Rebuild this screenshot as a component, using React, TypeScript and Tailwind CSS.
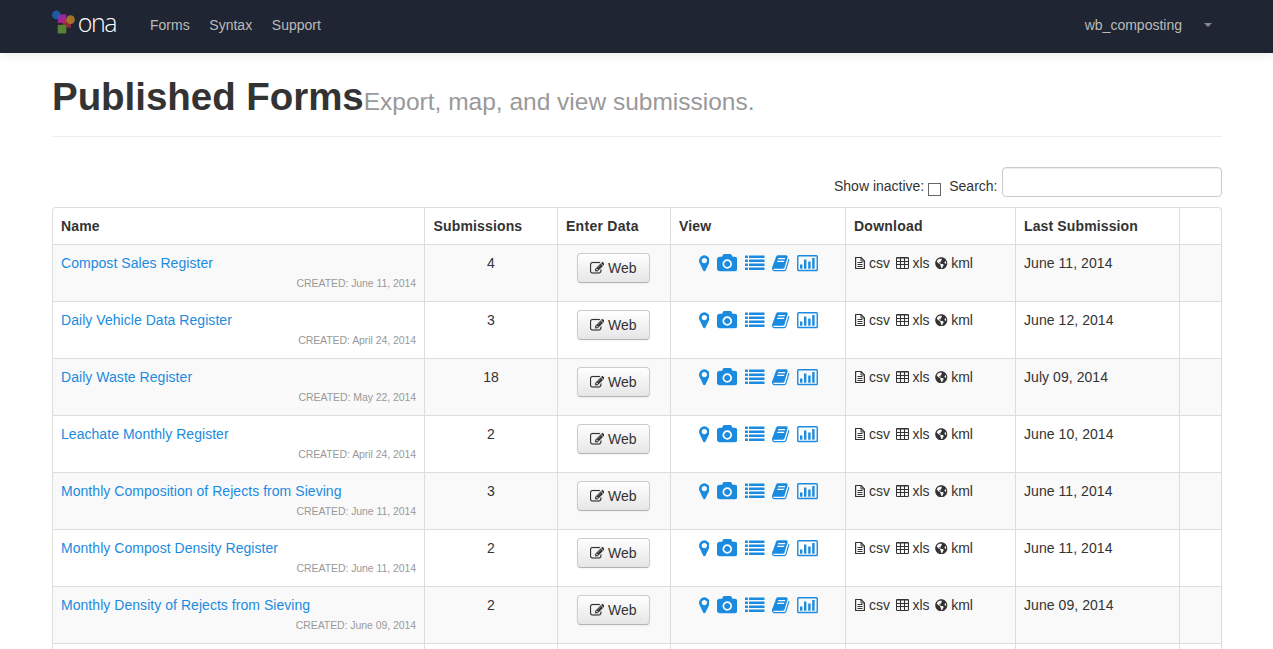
import React from "react";
import { FaGlobeAmericas } from "react-icons/fa";

type Form = { name: string; created: string; count: number; last: string };

const forms: Form[] = [
  { name: "Compost Sales Register", created: "June 11, 2014", count: 4, last: "June 11, 2014" },
  { name: "Daily Vehicle Data Register", created: "April 24, 2014", count: 3, last: "June 12, 2014" },
  { name: "Daily Waste Register", created: "May 22, 2014", count: 18, last: "July 09, 2014" },
  { name: "Leachate Monthly Register", created: "April 24, 2014", count: 2, last: "June 10, 2014" },
  { name: "Monthly Composition of Rejects from Sieving", created: "June 11, 2014", count: 3, last: "June 11, 2014" },
  { name: "Monthly Compost Density Register", created: "June 11, 2014", count: 2, last: "June 11, 2014" },
  { name: "Monthly Density of Rejects from Sieving", created: "June 09, 2014", count: 2, last: "June 09, 2014" },
];

function Logo() {
  return (
    <svg className="block h-[26px] w-[25px]" viewBox="0 0 25 26">
      <rect x="6" y="5" width="9" height="9" fill="#a0239a" />
      <rect x="11" y="10" width="9" height="9" fill="#c0303f" fillOpacity="0.65" />
      <rect x="6" y="16" width="9" height="9" fill="#568233" />
      <circle cx="4.5" cy="5.5" r="4.5" fill="#2166bb" fillOpacity="0.8" />
      <circle cx="19.5" cy="10.5" r="4.5" fill="#b08028" fillOpacity="0.88" />
    </svg>
  );
}

function MarkerIcon() {
  return (
    <svg className="h-[18.67px] w-[10.67px]" viewBox="384 0 1024 1792" fill="currentColor">
      <path d="M1152 640q0-106-75-181t-181-75-181 75-75 181 75 181 181 75 181-75 75-181zm256 0q0 109-33 179l-364 774q-16 33-47.5 52t-67.5 19-67.5-19-46.5-52l-365-774q-33-70-33-179 0-212 150-362t362-150 362 150 150 362z" />
    </svg>
  );
}

function CameraIcon() {
  return (
    <svg className="h-[18.67px] w-[20.5px]" viewBox="-64 0 1920 1792" preserveAspectRatio="none" fill="currentColor">
      <path d="M896 672q119 0 203.500 84.500t84.500 203.500-84.500 203.500-203.500 84.500-203.500-84.500-84.500-203.500 84.500-203.500 203.500-84.500zm704-416q106 0 181 75t75 181v896q0 106-75 181t-181 75h-1408q-106 0-181-75t-75-181v-896q0-106 75-181t181-75h224l51-136q19-49 69.500-84.500t103.500-35.500h512q53 0 103.500 35.500t69.500 84.500l51 136h224zm-704 1152q185 0 316.500-131.500t131.500-316.500-131.500-316.500-316.500-131.500-316.500 131.500-131.500 316.500 131.500 316.500 316.500 131.500z" />
    </svg>
  );
}

function ListIcon() {
  return (
    <svg className="h-[19px] w-[19.5px]" viewBox="0 0 19.5 19" fill="currentColor">
      {[1.4, 5.4, 9.4, 13.4].map((y) => (
        <g key={y}>
          <rect x="0" y={y} width="2.9" height="2.600" rx="0.300" />
          <rect x="4" y={y} width="15.500" height="2.600" rx="0.300" />
        </g>
      ))}
    </svg>
  );
}

function BookIcon() {
  return (
    <svg className="h-[18.67px] w-[17.33px]" viewBox="64 0 1664 1792" fill="currentColor">
      <path d="M1703 478q40 57 18 129l-275 906q-19 64-76.5 107.5t-122.5 43.5h-923q-77 0-148.5-53.5t-99.5-131.5q-24-67-2-127 0-4 3-27t4-37q1-8-3-21.5t-3-19.5q2-11 8-21t16.5-23.5 16.5-23.5q23-38 45-91.5t30-91.5q3-10 .5-30t-.5-28q3-11 17-28t17-23q21-36 42-92t25-90q1-9-2.5-32t.5-28q4-13 22-30.5t22-22.5q19-26 42.5-84.5t27.5-96.5q1-8-3-25.5t-2-26.5q2-8 9-18t18-23 17-21q8-12 16.5-30.5t15-35 16-36 19.5-32 26.5-23.5 36-11.5 47.5 5.5l-1 3q38-9 51-9h761q74 0 114 56t18 130l-274 906q-36 119-71.5 153.5t-128.5 34.5h-869q-27 0-38 15-11 16-1 43 24 70 144 70h923q29 0 56-15.5t35-41.5l300-987q7-22 5-57 38 15 59 43zm-1064 2q-4 13 2 22.5t20 9.5h608q13 0 25.5-9.5t16.5-22.5l21-64q4-13-2-22.5t-20-9.5h-608q-13 0-25.5 9.5t-16.5 22.5zm-83 256q-4 13 2 22.5t20 9.5h608q13 0 25.5-9.5t16.5-22.5l21-64q4-13-2-22.5t-20-9.5h-608q-13 0-25.5 9.5t-16.5 22.5z" />
    </svg>
  );
}

function ChartIcon() {
  return (
    <svg className="h-[19px] w-[21px]" viewBox="0 0 21 19" fill="currentColor">
      <rect x="0.750" y="1.750" width="19.500" height="14.700" rx="0.800" fill="none" stroke="currentColor" strokeWidth="1.400" />
      <rect x="3" y="10.500" width="2.400" height="4.200" />
      <rect x="7" y="5.500" width="2.400" height="9.200" />
      <rect x="11.200" y="7.500" width="2.400" height="7.200" />
      <rect x="15.200" y="4" width="2.400" height="10.700" />
    </svg>
  );
}

function FileIcon() {
  return (
    <svg className="h-[14px] w-[10px]" viewBox="0 0 10 14" fill="none" stroke="currentColor">
      <path d="M0.600 1.500h5.400l3.400 3.400v7.600H0.600z" strokeWidth="1.200" strokeLinejoin="round" />
      <path d="M6 1.500V5h3.500M2.500 6.500h5M2.500 8.500h5M2.500 10.500h5" />
    </svg>
  );
}

function TableIcon() {
  return (
    <svg className="h-[14px] w-[13px]" viewBox="0 0 13 14" fill="none" stroke="currentColor" strokeWidth="1.100">
      <rect x="0.500" y="1.500" width="12" height="11" rx="0.900" />
      <path d="M0.500 2h12M0.500 5.500h12M0.500 8.500h12M4.500 2v10.500M8.500 2v10.500" />
    </svg>
  );
}

function EditIcon() {
  return (
    <svg className="h-[14.5px] w-[14.5px]" viewBox="0 0 1792 1792" fill="currentColor" stroke="currentColor" strokeWidth="20">
      <path d="M888 1184l116-116-152-152-116 116v56h96v96h56zm440-720q-16-16-33 1l-350 350q-17 17-1 33t33-1l350-350q17-17 1-33zm80 594v190q0 119-84.5 203.5t-203.5 84.5h-832q-119 0-203.5-84.5t-84.5-203.5v-832q0-119 84.500-203.500t203.500-84.500h832q63 0 117 25 15 7 18 23 3 17-9 29l-49 49q-14 14-32 8-23-6-45-6h-832q-66 0-113 47t-47 113v832q0 66 47 113t113 47h832q66 0 113-47t47-113v-126q0-13 9-22l64-64q15-15 35-7t20 29zm-96-738l288 288-672 672h-288v-288zm444 132l-92 92-288-288 92-92q28-28 68-28t68 28l152 152q28 28 28 68t-28 68z" />
    </svg>
  );
}

const cell = "border-t border-l border-[#ddd] p-2 align-top";
const head = "border-l border-[#ddd] p-2 text-left align-bottom font-bold";

function FormRow({ form, striped }: { form: Form; striped: boolean }) {
  return (
    <tr className={striped ? "h-[57px] bg-[#f9f9f9]" : "h-[57px]"}>
      <td className={cell}>
        <a className="block tracking-[0.045px] text-[#1b8be0]">{form.name}</a>
        <div className="text-right text-[10.5px] leading-5 tracking-[-0.07px] text-[#999]">CREATED: {form.created}</div>
      </td>
      <td className={cell + " text-center"}>{form.count}</td>
      <td className={cell}>
        <button className="ml-[11px] flex h-[30px] w-[73px] items-center rounded border border-[#ccc] border-b-[#b3b3b3] bg-linear-to-b from-white to-[#e6e6e6] pl-[11.5px] shadow-[0_1px_2px_rgba(0,0,0,0.05)]">
          <EditIcon />
          <span className="ml-1">Web</span>
        </button>
      </td>
      <td className={cell}>
        <div className="flex items-start gap-[7.7px] pt-px pl-[19.6px] text-[#1b8be0]">
          <MarkerIcon />
          <CameraIcon />
          <ListIcon />
          <BookIcon />
          <ChartIcon />
        </div>
      </td>
      <td className={cell}>
        <div className="flex items-center">
          <span className="ml-px"><FileIcon /></span>
          <span className="ml-1">csv</span>
          <span className="ml-[6px]"><TableIcon /></span>
          <span className="ml-[3.5px]">xls</span>
          <FaGlobeAmericas className="ml-[5.5px] size-[12.5px]" />
          <span className="ml-[3.5px]">kml</span>
        </div>
      </td>
      <td className={cell + " tracking-[0.06px]"}>{form.last}</td>
      <td className={cell} />
    </tr>
  );
}

export default function App() {
  return (
    <div className="h-screen overflow-hidden bg-white font-['Liberation_Sans',Arial,sans-serif] text-sm leading-5 text-[#333]">
      <nav className="flex h-[53px] items-start bg-[#1f2532] pl-[52px] text-[#bbb] shadow-[0_1px_10px_rgba(0,0,0,0.1)]">
        <div className="flex w-[64px] pt-[9px]">
          <Logo />
          <span className="ml-[2px] font-['Open_Sans',sans-serif] text-[25px] leading-[26px] font-light tracking-[-1.5px] text-white">ona</span>
        </div>
        <div className="ml-[34px] flex gap-[19.7px] pt-[15px]">
          <a>Forms</a>
          <a>Syntax</a>
          <a>Support</a>
        </div>
        <div className="mr-[61px] ml-auto flex items-center gap-[22px] pt-[15px]">
          <span>wb_composting</span>
          <svg className="h-1 w-2" viewBox="0 0 8 4" fill="#888"><path d="M0 0h8L4 4z" /></svg>
        </div>
      </nav>

      <main className="ml-[52px] w-[1170px]">
        <header className="flex h-[84px] items-baseline border-b border-[#eee] pt-6">
          <h1 className="text-[38.5px] leading-10 font-bold tracking-[-0.04px]">Published Forms</h1>
          <small className="text-[24.5px] leading-10 text-[#999]">Export, map, and view submissions.</small>
        </header>

        <div className="mt-[30px] flex h-[30px] justify-end">
          <span className="pt-[9px]">Show inactive:</span>
          <span className="mt-4 ml-1 size-[13px] border border-[#666] bg-white" />
          <span className="ml-2 pt-[9px]">Search:</span>
          <input className="ml-[4.5px] h-[30px] w-[220px] rounded border border-[#ccc] bg-white shadow-[inset_0_1px_1px_rgba(0,0,0,0.075)] outline-none" />
        </div>

        <table className="mt-[10px] w-[1170px] table-fixed border-separate border-spacing-0 rounded border border-l-0 border-[#ddd]">
          <colgroup>
            <col className="w-[372px]" />
            <col className="w-[133px]" />
            <col className="w-[113px]" />
            <col className="w-[175px]" />
            <col className="w-[170px]" />
            <col className="w-[164px]" />
            <col className="w-[42px]" />
          </colgroup>
          <thead>
            <tr>
              <th className={head + " rounded-tl tracking-[0.15px]"}>Name</th>
              <th className={head + " pl-[8.5px] tracking-[0.15px]"}>Submissions</th>
              <th className={head + " tracking-[0.28px]"}>Enter Data</th>
              <th className={head + " tracking-[0.15px]"}>View</th>
              <th className={head + " tracking-[0.25px]"}>Download</th>
              <th className={head + " tracking-[0.13px]"}>Last Submission</th>
              <th className={head} />
            </tr>
          </thead>
          <tbody>
            {forms.map((form, i) => (
              <FormRow key={form.name} form={form} striped={i % 2 === 0} />
            ))}
            <tr className="h-[57px]">
              {[0, 1, 2, 3, 4, 5, 6].map((i) => (
                <td key={i} className={cell} />
              ))}
            </tr>
          </tbody>
        </table>
      </main>
    </div>
  );
}
